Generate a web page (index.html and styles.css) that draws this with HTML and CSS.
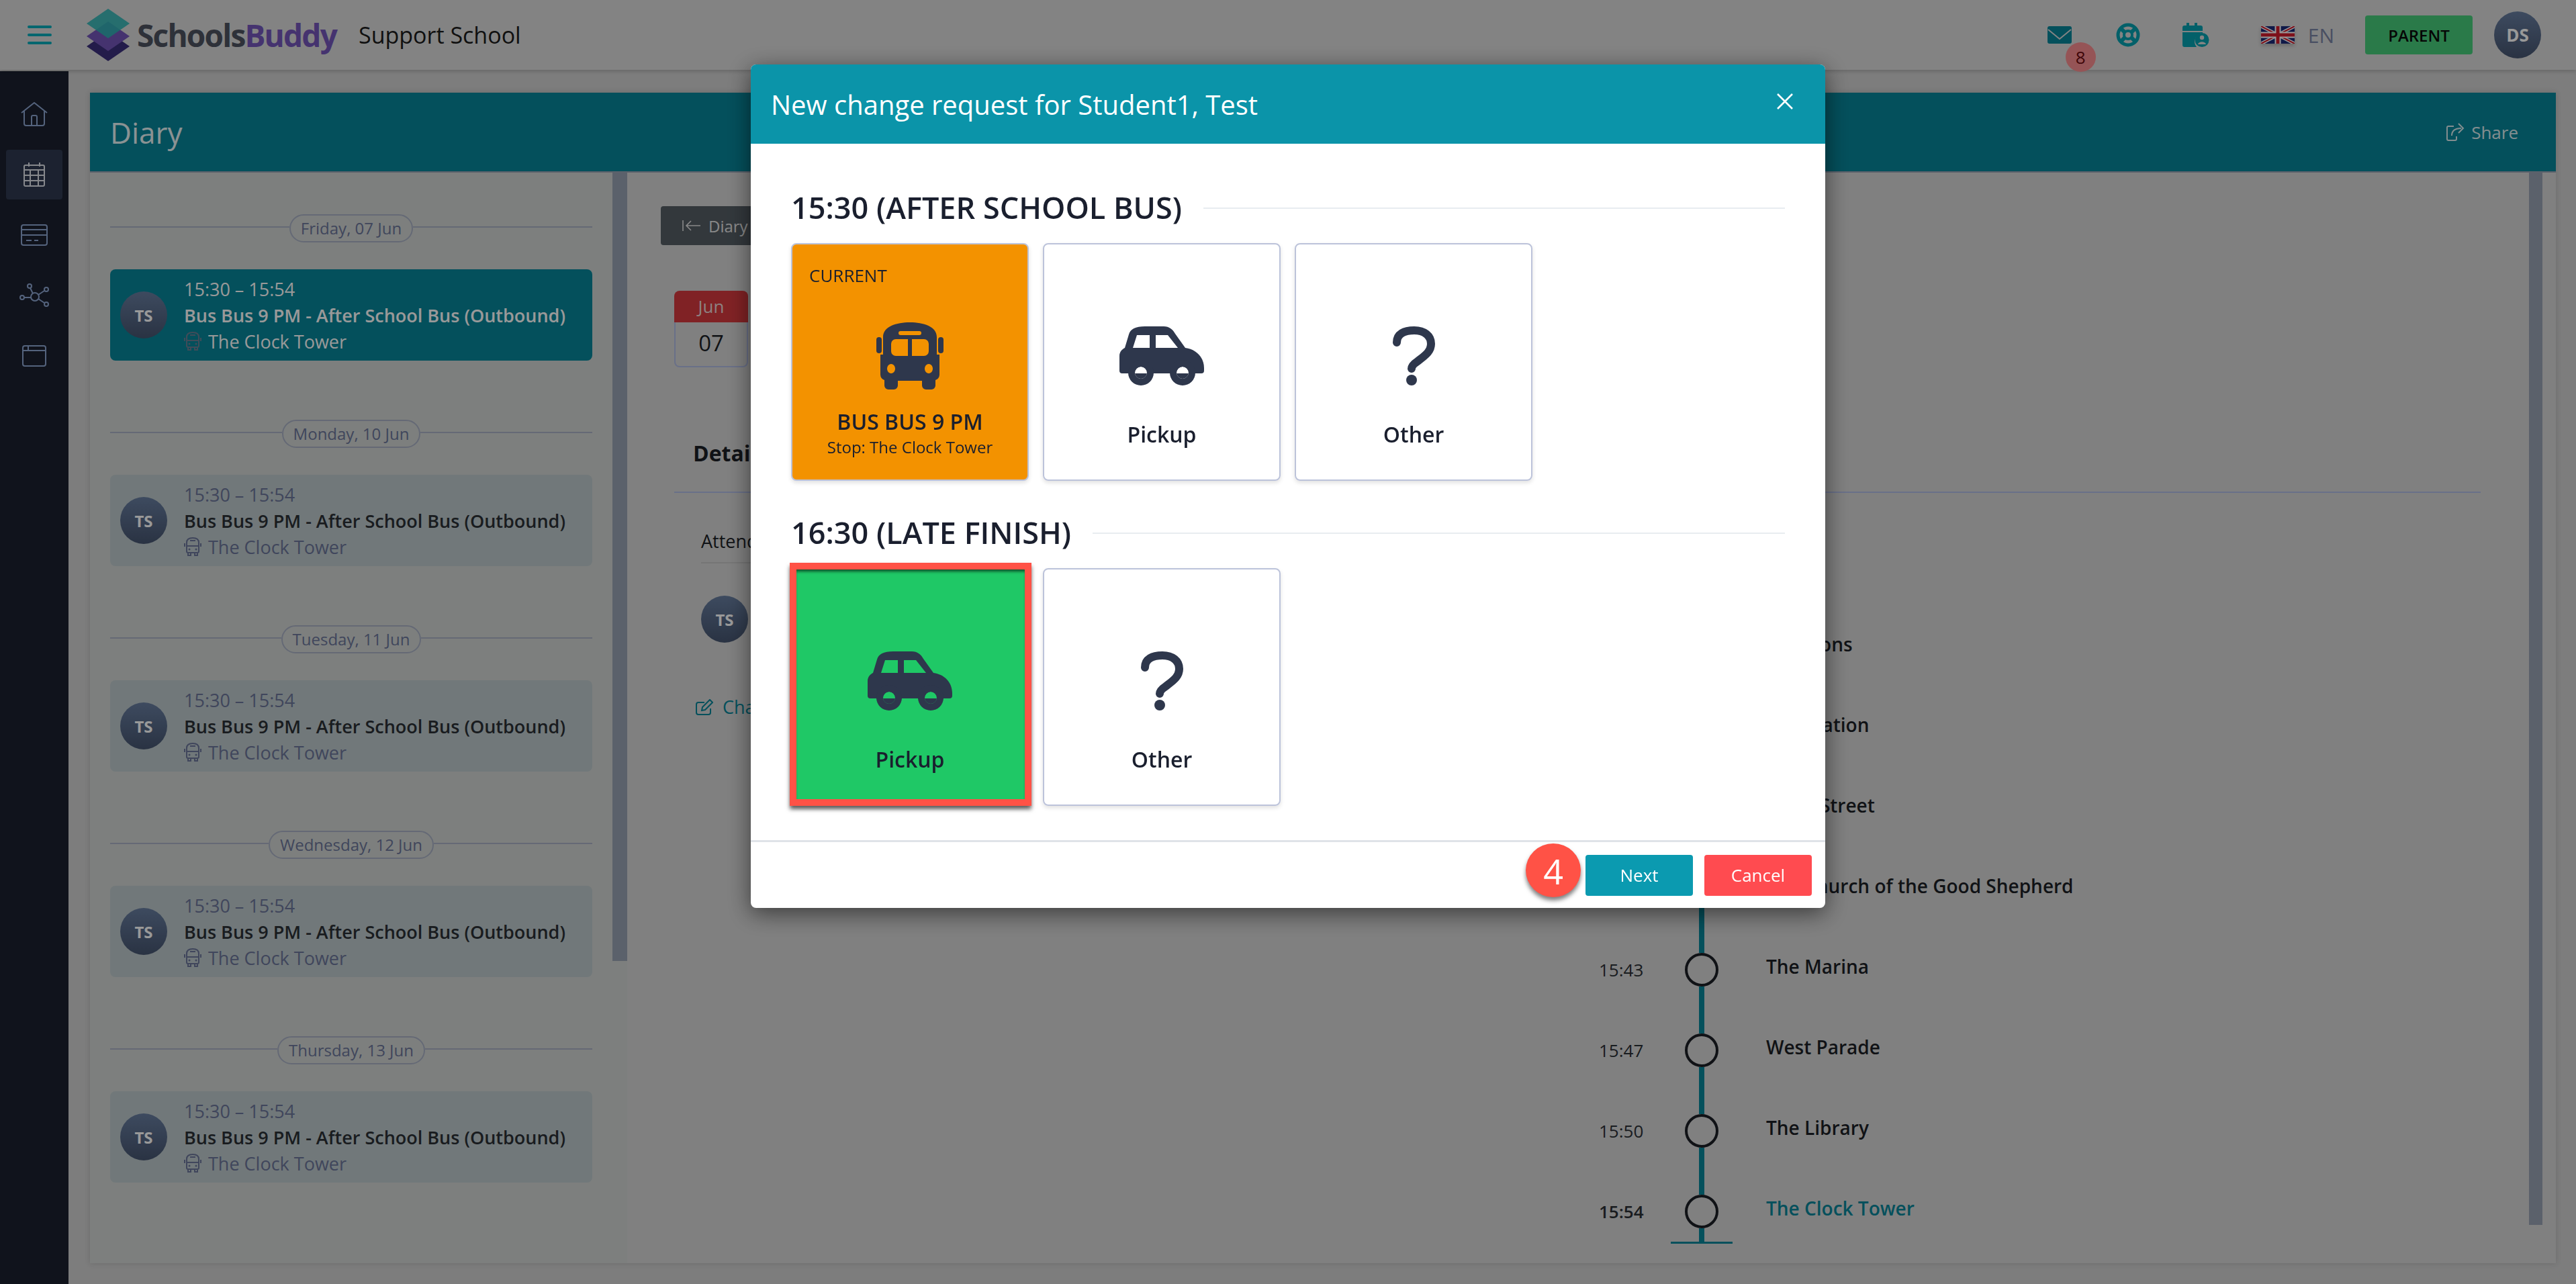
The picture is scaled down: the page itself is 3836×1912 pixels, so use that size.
FILE: index.html
```html
<!DOCTYPE html>
<html lang="en">
<head>
    <meta charset="UTF-8">
    <title>SchoolsBuddy - Diary</title>
    <link rel="stylesheet" href="styles.css">
</head>
<body>
    <svg class="defs" width="0" height="0">
        <symbol id="mini-bus" viewBox="0 0 26 28">
            <path d="M4 8C4 3 8 1 13 1s9 2 9 7v13a2 2 0 0 1-2 2H6a2 2 0 0 1-2-2zM4 13h18M9 5h8M6 23v4h4v-4M16 23v4h4v-4M1 9v5M25 9v5" fill="none" stroke="currentColor" stroke-width="2"/>
            <circle cx="8" cy="18" r="1.5" fill="currentColor"/>
            <circle cx="18" cy="18" r="1.5" fill="currentColor"/>
        </symbol>
        <symbol id="bus" viewBox="0 0 100 100">
            <path fill-rule="evenodd" d="M10 22C10 6 30 0 50 0s40 6 40 22v26h4v30a9 9 0 0 1-6 8v8a6 6 0 0 1-6 6h-8a6 6 0 0 1-6-6v-7H32v7a6 6 0 0 1-6 6h-8a6 6 0 0 1-6-6v-8a9 9 0 0 1-6-8V48h4zM22 32a7 7 0 0 1 7-7h18v25H29a7 7 0 0 1-7-7zM53 25h18a7 7 0 0 1 7 7v11a7 7 0 0 1-7 7H53zM36 13h28a3 3 0 0 1 0 6H36a3 3 0 0 1 0-6zM22 62a6 7 0 1 0 .01 0zM78 62a6 7 0 1 0 .01 0z"/>
            <rect x="0" y="22" width="8" height="24" rx="4"/>
            <rect x="92" y="22" width="8" height="24" rx="4"/>
        </symbol>
        <symbol id="car" viewBox="0 0 126 88">
            <path fill-rule="evenodd" d="M38 0H66C74 0 79 4 83 11L98 32C114 34 126 46 126 62V66a4 4 0 0 1-4 4H4a4 4 0 0 1-4-4V44C0 38 4 34 8 32L14 12C16 4 24 0 38 0zM26 13H45V32H20zM54 13H72L87 32H54zM23 69a9 9 0 1 0 18 0a9 9 0 1 0-18 0zM85 69a9 9 0 1 0 18 0a9 9 0 1 0-18 0z"/>
            <path fill-rule="evenodd" d="M13 69a19 19 0 1 0 38 0a19 19 0 1 0-38 0zM23 69a9 9 0 1 0 18 0a9 9 0 1 0-18 0zM75 69a19 19 0 1 0 38 0a19 19 0 1 0-38 0zM85 69a9 9 0 1 0 18 0a9 9 0 1 0-18 0z"/>
        </symbol>
        <symbol id="question" viewBox="0 0 65 88">
            <path d="M7 24C7 11 18 6 33 6c15 0 25 8 25 20 0 12-10 18-20 26-6 4-9 7-9 11" fill="none" stroke="currentColor" stroke-width="12" stroke-linecap="round"/>
            <ellipse cx="29" cy="80" rx="8" ry="8"/>
        </symbol>
    </svg>

    <header class="topbar">
        <svg class="burger" viewBox="0 0 36 28"><path d="M2 2h32M2 14h32M2 26h32" stroke="currentColor" stroke-width="4" stroke-linecap="round"/></svg>
        <svg class="logo-mark" viewBox="0 0 64 78">
            <path d="M32 34L64 56 32 78 0 56z" fill="#3b2f7c"/>
            <path d="M32 19L64 41 32 63 0 41z" fill="#7355b9"/>
            <path d="M32 0L64 22 32 44 0 22z" fill="#2fb3b3" fill-opacity=".9"/>
        </svg>
        <div class="logo-text">Schools<span>Buddy</span></div>
        <div class="school-name">Support School</div>

        <div class="top-actions">
            <div class="mail">
                <svg class="mail-icon" viewBox="0 0 36 26"><rect width="36" height="26" rx="3" fill="currentColor"/><path d="M1 5l17 14L35 5" fill="none" stroke="#dadada" stroke-width="2"/></svg>
                <span class="mail-badge">8</span>
            </div>
            <svg class="life-icon" viewBox="0 0 36 36">
                <circle cx="18" cy="18" r="15" fill="none" stroke="currentColor" stroke-width="5"/>
                <circle cx="18" cy="18" r="6" fill="none" stroke="currentColor" stroke-width="4"/>
                <path d="M6 7l7 7M30 7l-7 7M6 29l7-7M30 29l-7-7" stroke="currentColor" stroke-width="6"/>
            </svg>
            <svg class="cal-icon" viewBox="0 0 40 36">
                <path d="M6 0h4v5H6zM18 0h4v5h-4zM3 4h24a3 3 0 0 1 3 3v5H0V7a3 3 0 0 1 3-3zM0 14h30v1a13 13 0 0 0-9 21H3a3 3 0 0 1-3-3z" fill="currentColor"/>
                <circle cx="29" cy="25.500" r="10.500" fill="currentColor"/>
                <circle cx="29" cy="22" r="3.200" fill="#dadada"/>
                <path d="M23 32c1-5 11-5 12 0z" fill="#dadada"/>
            </svg>
            <svg class="flag" viewBox="0 0 50 26">
                <rect width="50" height="26" fill="#1c2a78"/>
                <path d="M0 0l50 26M50 0L0 26" stroke="#fff" stroke-width="5"/>
                <path d="M0 0l50 26M50 0L0 26" stroke="#d01c2c" stroke-width="2"/>
                <path d="M25 0v26M0 13h50" stroke="#fff" stroke-width="9"/>
                <path d="M25 0v26M0 13h50" stroke="#d01c2c" stroke-width="5"/>
            </svg>
            <span class="lang">EN</span>
            <span class="role-btn">PARENT</span>
            <span class="avatar avatar-top">DS</span>
        </div>
    </header>

    <div class="shell">
        <nav class="sidebar">
            <div class="side-item">
                <svg width="40" height="36" viewBox="0 0 40 36"><path d="M1 16L20 1l19 15M5 13v19a3 3 0 0 0 3 3h24a3 3 0 0 0 3-3V13M16 35V22a2 2 0 0 1 2-2h4a2 2 0 0 1 2 2v13"/></svg>
            </div>
            <div class="side-item active">
                <svg width="32" height="36" viewBox="4 0 32 36"><path d="M5 6a2 2 0 0 1 2-2h26a2 2 0 0 1 2 2v27a2 2 0 0 1-2 2H7a2 2 0 0 1-2-2zM5 11h30M5 19h30M5 27h30M14 11v24M26 11v24M12 0v6M28 0v6"/></svg>
            </div>
            <div class="side-item">
                <svg width="40" height="32" viewBox="0 0 40 32"><path d="M1 4a3 3 0 0 1 3-3h32a3 3 0 0 1 3 3v24a3 3 0 0 1-3 3H4a3 3 0 0 1-3-3zM1 8h38M1 16h38M8 24h8M20 24h6"/></svg>
            </div>
            <div class="side-item">
                <svg width="44" height="36" viewBox="0 0 44 36"><circle cx="23" cy="20" r="6"/><circle cx="4" cy="21" r="3"/><circle cx="15" cy="4" r="3"/><circle cx="40" cy="9" r="3"/><circle cx="40" cy="31" r="3"/><path d="M7 21h10M16 7l4 8M37 11l-9 6M37 29l-9-6"/></svg>
            </div>
            <div class="side-item">
                <svg width="36" height="32" viewBox="0 0 36 32"><path d="M1 4a3 3 0 0 1 3-3h28a3 3 0 0 1 3 3v24a3 3 0 0 1-3 3H4a3 3 0 0 1-3-3zM1 8h34M9 1v7"/></svg>
            </div>
        </nav>

        <main class="main">
            <div class="panel">
                <div class="panel-head">
                    <h1>Diary</h1>
                    <div class="share">
                        <svg viewBox="0 0 30 27"><path d="M11 5H3a2 2 0 0 0-2 2v17a2 2 0 0 0 2 2h10a2 2 0 0 0 2-2v-4M8 19c0-8 6-11 14-11M18 1l7 7-7 7" fill="none" stroke="currentColor" stroke-width="2"/></svg>
                        <span>Share</span>
                    </div>
                </div>

                <div class="panel-body">
                    <div class="left-pane">
                        <div class="day-list">
                            <section class="day">
                                <div class="day-label"><span>Friday, 07 Jun</span></div>
                                <div class="trip active">
                                    <span class="avatar">TS</span>
                                    <div class="trip-text">
                                        <div class="trip-time">15:30 – 15:54</div>
                                        <div class="trip-title">Bus Bus 9 PM - After School Bus (Outbound)</div>
                                        <div class="trip-place"><svg><use href="#mini-bus"/></svg>The Clock Tower</div>
                                    </div>
                                </div>
                            </section>
                            <section class="day">
                                <div class="day-label"><span>Monday, 10 Jun</span></div>
                                <div class="trip">
                                    <span class="avatar">TS</span>
                                    <div class="trip-text">
                                        <div class="trip-time">15:30 – 15:54</div>
                                        <div class="trip-title">Bus Bus 9 PM - After School Bus (Outbound)</div>
                                        <div class="trip-place"><svg><use href="#mini-bus"/></svg>The Clock Tower</div>
                                    </div>
                                </div>
                            </section>
                            <section class="day">
                                <div class="day-label"><span>Tuesday, 11 Jun</span></div>
                                <div class="trip">
                                    <span class="avatar">TS</span>
                                    <div class="trip-text">
                                        <div class="trip-time">15:30 – 15:54</div>
                                        <div class="trip-title">Bus Bus 9 PM - After School Bus (Outbound)</div>
                                        <div class="trip-place"><svg><use href="#mini-bus"/></svg>The Clock Tower</div>
                                    </div>
                                </div>
                            </section>
                            <section class="day">
                                <div class="day-label"><span>Wednesday, 12 Jun</span></div>
                                <div class="trip">
                                    <span class="avatar">TS</span>
                                    <div class="trip-text">
                                        <div class="trip-time">15:30 – 15:54</div>
                                        <div class="trip-title">Bus Bus 9 PM - After School Bus (Outbound)</div>
                                        <div class="trip-place"><svg><use href="#mini-bus"/></svg>The Clock Tower</div>
                                    </div>
                                </div>
                            </section>
                            <section class="day">
                                <div class="day-label"><span>Thursday, 13 Jun</span></div>
                                <div class="trip">
                                    <span class="avatar">TS</span>
                                    <div class="trip-text">
                                        <div class="trip-time">15:30 – 15:54</div>
                                        <div class="trip-title">Bus Bus 9 PM - After School Bus (Outbound)</div>
                                        <div class="trip-place"><svg><use href="#mini-bus"/></svg>The Clock Tower</div>
                                    </div>
                                </div>
                            </section>
                        </div>
                        <div class="scroll-thumb left-thumb"></div>
                    </div>

                    <div class="right-pane">
                        <div class="back-btn">
                            <svg viewBox="0 0 28 20"><path d="M1 2v16M27 10H6M13 3l-7 7 7 7" fill="none" stroke="currentColor" stroke-width="1.600"/></svg>
                            <span>Diary</span>
                        </div>
                        <div class="date-box">
                            <div class="date-month">Jun</div>
                            <div class="date-day">07</div>
                        </div>
                        <div class="details">
                            <h2 class="details-title">Details</h2>
                            <div class="details-body">
                                <div class="attendees">
                                    <div class="attendees-title">Attendees</div>
                                    <span class="avatar">TS</span>
                                    <div class="change-link">
                                        <svg viewBox="0 0 26 24"><path d="M22 14v6a3 3 0 0 1-3 3H4a3 3 0 0 1-3-3V8a3 3 0 0 1 3-3h9M9 17l1-5L21 1l4 4-11 11z" fill="none" stroke="currentColor" stroke-width="2"/></svg>
                                        <span>Change</span>
                                    </div>
                                </div>
                                <div class="route">
                                    <div class="stop"><span class="stop-time">15:30</span><span class="stop-mark"><i></i></span><span class="stop-name">The Lions</span></div>
                                    <div class="stop"><span class="stop-time">15:33</span><span class="stop-mark"><i></i></span><span class="stop-name">The Station</span></div>
                                    <div class="stop"><span class="stop-time">15:36</span><span class="stop-mark"><i></i></span><span class="stop-name">Kings Street</span></div>
                                    <div class="stop"><span class="stop-time">15:39</span><span class="stop-mark"><i></i></span><span class="stop-name">The Church of the Good Shepherd</span></div>
                                    <div class="stop"><span class="stop-time">15:43</span><span class="stop-mark"><i></i></span><span class="stop-name">The Marina</span></div>
                                    <div class="stop"><span class="stop-time">15:47</span><span class="stop-mark"><i></i></span><span class="stop-name">West Parade</span></div>
                                    <div class="stop"><span class="stop-time">15:50</span><span class="stop-mark"><i></i></span><span class="stop-name">The Library</span></div>
                                    <div class="stop stop-last"><span class="stop-time">15:54</span><span class="stop-mark"><i></i></span><span class="stop-name">The Clock Tower</span></div>
                                </div>
                            </div>
                        </div>
                    </div>
                    <div class="scroll-thumb right-thumb"></div>
                </div>
            </div>
        </main>
    </div>

    <div class="backdrop">
        <div class="modal">
            <div class="modal-head">
                <span>New change request for Student1, Test</span>
                <svg class="modal-close" viewBox="0 0 26 26"><path d="M2 2l22 22M24 2L2 24" stroke="currentColor" stroke-width="2.600"/></svg>
            </div>
            <div class="modal-body">
                <div class="slot">
                    <div class="slot-title"><span>15:30 (AFTER SCHOOL BUS)</span></div>
                    <div class="choices">
                        <div class="choice current">
                            <span class="choice-tag">CURRENT</span>
                            <div class="choice-icon"><svg class="ic-bus"><use href="#bus"/></svg></div>
                            <div class="choice-label">
                                <strong>BUS BUS 9 PM</strong>
                                <small>Stop: The Clock Tower</small>
                            </div>
                        </div>
                        <div class="choice">
                            <div class="choice-icon"><svg class="ic-car"><use href="#car"/></svg></div>
                            <div class="choice-label">Pickup</div>
                        </div>
                        <div class="choice">
                            <div class="choice-icon"><svg class="ic-question"><use href="#question"/></svg></div>
                            <div class="choice-label">Other</div>
                        </div>
                    </div>
                </div>
                <div class="slot">
                    <div class="slot-title"><span>16:30 (LATE FINISH)</span></div>
                    <div class="choices">
                        <div class="choice selected">
                            <div class="choice-icon"><svg class="ic-car"><use href="#car"/></svg></div>
                            <div class="choice-label">Pickup</div>
                            <div class="mark-box"></div>
                        </div>
                        <div class="choice">
                            <div class="choice-icon"><svg class="ic-question"><use href="#question"/></svg></div>
                            <div class="choice-label">Other</div>
                        </div>
                    </div>
                </div>
            </div>
            <div class="modal-foot">
                <span class="step-mark">4</span>
                <button class="btn btn-next">Next</button>
                <button class="btn btn-cancel">Cancel</button>
            </div>
        </div>
    </div>
</body>
</html>
```

FILE: styles.css
```css
* {
    box-sizing: border-box;
}

html, body {
    margin: 0;
    height: 100%;
    overflow: hidden;
}

body {
    font-family: "Open Sans", "Liberation Sans", sans-serif;
    font-size: 27px;
    background-color: #d0d0d0;
    color: #2b2f35;
}

.defs {
    position: absolute;
}

/* top bar */
.topbar {
    height: 104px;
    display: flex;
    align-items: center;
    background-color: #dadada;
    box-shadow: 0 2px 6px rgba(0, 0, 0, 0.2);
    position: relative;
}

.burger {
    width: 36px;
    height: 28px;
    margin-left: 41px;
    color: #05abba;
}

.logo-mark {
    width: 64px;
    height: 78px;
    margin-left: 52px;
}

.logo-text {
    margin-left: 11px;
    font-size: 46px;
    font-weight: 700;
    letter-spacing: -1.8px;
    color: #4d5360;
}

.logo-text span {
    color: #7355b9;
}

.school-name {
    margin-left: 33px;
    font-size: 34px;
    color: #1c1c1c;
}

.top-actions {
    margin-left: auto;
    margin-right: 52px;
    display: flex;
    align-items: center;
    color: #05a0b0;
}

.mail {
    position: relative;
    display: flex;
}

.mail-icon {
    width: 36px;
    height: 26px;
    color: #078599;
}

.mail-badge {
    position: absolute;
    left: 27px;
    top: 24px;
    width: 45px;
    height: 44px;
    border-radius: 50%;
    display: flex;
    align-items: center;
    justify-content: center;
    font-size: 26px;
    background-color: #f98d8f;
    color: #6a0a10;
}

.life-icon {
    width: 36px;
    height: 36px;
    margin-left: 66px;
    color: #05a0b0;
}

.cal-icon {
    width: 40px;
    height: 36px;
    margin-left: 63px;
    color: #05a0b0;
}

.flag {
    width: 50px;
    height: 26px;
    margin-left: 77px;
    box-shadow: 0 3px 5px rgba(0, 0, 0, 0.2);
}

.lang {
    margin-left: 20px;
    font-size: 30px;
    color: #7a84a4;
}

.role-btn {
    margin-left: 46px;
    width: 160px;
    height: 58px;
    border-radius: 4px;
    display: flex;
    align-items: center;
    justify-content: center;
    background-color: #46cc7b;
    color: #0a0a0a;
    font-size: 24px;
    font-weight: 600;
}

.avatar {
    width: 70px;
    height: 70px;
    flex: none;
    border-radius: 50%;
    display: flex;
    align-items: center;
    justify-content: center;
    background: linear-gradient(#677d9f, #465570);
    color: #fff;
    font-size: 24px;
    font-weight: 700;
}

.avatar-top {
    margin-left: 32px;
    font-size: 26px;
}

/* page frame */
.shell {
    display: flex;
    height: 1808px;
}

.sidebar {
    width: 102px;
    margin-top: 2px;
    padding-top: 27px;
    background-color: #1b2130;
    display: flex;
    flex-direction: column;
    align-items: center;
    gap: 16px;
}

.side-item {
    width: 84px;
    height: 74px;
    border-radius: 4px;
    display: flex;
    align-items: center;
    justify-content: center;
}

.side-item.active {
    background-color: #2f3950;
}

.side-item svg {
    fill: none;
    stroke: #8da5d0;
    stroke-width: 2;
}

.side-item.active svg {
    stroke: #dfe3ea;
}

.main {
    flex: 1;
    padding: 34px 30px 31px 32px;
}

.panel {
    height: 100%;
    background-color: #d5d5d5;
    box-shadow: 0 0 8px rgba(0, 0, 0, 0.15);
    display: flex;
    flex-direction: column;
}

.panel-head {
    height: 119px;
    flex: none;
    background-color: #078599;
    border-bottom: 2px solid #98a2b3;
    padding: 0 56px 0 30px;
    display: flex;
    align-items: center;
    justify-content: space-between;
    color: #fff;
}

.panel-head h1 {
    margin: 0;
    font-size: 44px;
    font-weight: 400;
    opacity: 0.9;
}

.share {
    display: flex;
    align-items: center;
    gap: 7px;
    font-size: 26px;
    opacity: 0.85;
}

.share svg {
    width: 30px;
    height: 27px;
}

.panel-body {
    flex: 1;
    display: flex;
    min-height: 0;
}

.scroll-thumb {
    flex: none;
    align-self: flex-start;
    background-color: #98a2b3;
}

/* left list */
.left-pane {
    width: 800px;
    flex: none;
    display: flex;
    background-color: #d0d4d2;
}

.day-list {
    width: 778px;
    padding: 62px 30px 0;
}

.left-thumb {
    width: 22px;
    height: 1174px;
}

.day {
    margin-bottom: 88px;
}

.day-label {
    height: 42px;
    display: flex;
    align-items: center;
    margin-bottom: 40px;
    font-size: 24px;
    color: #6b7599;
}

.day-label::before, .day-label::after {
    content: "";
    flex: 1;
    height: 2px;
    margin-bottom: 5px;
    background-color: #a8b0c4;
}

.day-label span {
    height: 42px;
    padding: 0 15px;
    border: 2px solid #a8b0c4;
    border-radius: 21px;
    display: flex;
    align-items: center;
    line-height: 1;
}

.trip {
    height: 136px;
    padding-left: 15px;
    border-radius: 8px;
    display: flex;
    align-items: center;
    gap: 25px;
    background-color: #bcc8cb;
}

.trip.active {
    background-color: #078599;
    color: #fff;
}

.trip-text {
    line-height: 39px;
}

.trip-time, .trip-place {
    color: #6b7599;
}

.trip-title {
    font-weight: 600;
}

.trip-place {
    display: flex;
    align-items: center;
    gap: 10px;
}

.trip-place svg {
    width: 26px;
    height: 28px;
}

.trip.active .trip-time, .trip.active .trip-place {
    color: #fff;
}

.trip.active .trip-place svg {
    color: #6b7f94;
}

/* right side */
.right-pane {
    flex: 1;
    padding: 50px 0 0 50px;
    min-width: 0;
}

.right-thumb {
    width: 20px;
    height: 1567px;
    margin-right: 20px;
}

.back-btn {
    width: 180px;
    height: 58px;
    padding-left: 32px;
    border-radius: 4px;
    display: flex;
    align-items: center;
    gap: 11px;
    background-color: #555e65;
    color: #e3e3e3;
    font-size: 24px;
}

.back-btn svg {
    width: 28px;
    height: 20px;
}

.date-box {
    width: 110px;
    margin: 68px 0 0 20px;
    text-align: center;
}

.date-month {
    height: 47px;
    border-radius: 8px 8px 0 0;
    background-color: #d63a3e;
    color: #ecd8d8;
    line-height: 47px;
    font-size: 26px;
}

.date-day {
    height: 67px;
    border: 2px solid #b0bbe3;
    border-top: none;
    border-radius: 0 0 8px 8px;
    font-size: 33px;
    line-height: 62px;
    color: #1c1f26;
}

.details {
    width: 2690px;
    margin: 106px 0 0 20px;
}

.details-title {
    margin: 0;
    height: 81px;
    padding-left: 28px;
    border-bottom: 2px solid #b0bbe3;
    font-size: 32px;
    line-height: 44px;
    font-weight: 700;
    color: #1c1f26;
}

.details-body {
    display: grid;
    grid-template-columns: 1377px 1fr;
}

.attendees {
    padding: 52px 0 0 40px;
}

.attendees-title {
    height: 53px;
    margin-bottom: 48px;
    line-height: 40px;
    border-bottom: 2px solid #c4c4c4;
    color: #1c1f26;
}

.change-link {
    margin: 76px 0 0 -8px;
    display: flex;
    align-items: center;
    gap: 14px;
    color: #078599;
    line-height: 40px;
}

.change-link svg {
    width: 26px;
    height: 24px;
}

.route {
    margin-top: 170px;
}

.stop {
    height: 120px;
    display: flex;
    align-items: stretch;
}

.stop-time {
    width: 128px;
    display: flex;
    align-items: center;
    font-size: 26px;
    color: #2b2f35;
}

.stop-last .stop-time {
    font-weight: 600;
}

.stop-mark {
    width: 50px;
    flex: none;
    display: flex;
    flex-direction: column;
    align-items: center;
}

.stop-mark::before, .stop-mark::after {
    content: "";
    flex: 1;
    width: 8px;
    background-color: #078599;
}

.stop-mark i {
    width: 50px;
    height: 50px;
    flex: none;
    border: 4px solid #1c1f26;
    border-radius: 50%;
}

.stop-last .stop-mark {
    height: 108px;
    width: 92px;
    margin: 0 -21px;
    background: linear-gradient(#078599, #078599) bottom / 100% 3px no-repeat;
}

.stop-last .stop-mark::before {
    flex: none;
    height: 35px;
}

.stop-name {
    margin-left: 71px;
    margin-top: 37px;
    line-height: 36px;
    font-size: 28px;
    font-weight: 600;
    white-space: nowrap;
    color: #1c1f26;
}

.stop-last .stop-name {
    color: #078599;
}

/* change request modal */
.backdrop {
    position: fixed;
    inset: 0;
    background-color: rgba(0, 0, 0, 0.4);
    display: flex;
    justify-content: center;
    align-items: flex-start;
    padding-top: 96px;
}

.modal {
    width: 1600px;
    border-radius: 8px;
    overflow: hidden;
    background-color: #fff;
    box-shadow: 0 8px 34px rgba(0, 0, 0, 0.55);
}

.modal-head {
    height: 118px;
    padding: 0 47px 0 30px;
    display: flex;
    align-items: center;
    justify-content: space-between;
    background-color: #0b94a9;
    color: #fff;
    font-size: 40px;
}

.modal-close {
    width: 26px;
    height: 26px;
    margin-top: -8px;
}

.modal-body {
    padding: 64px 60px 51px 60px;
}

.slot + .slot {
    margin-top: 46px;
}

.slot-title {
    height: 60px;
    margin-bottom: 24px;
    display: flex;
    align-items: center;
    gap: 32px;
    font-size: 45px;
    font-weight: 600;
    color: #1a1f2e;
}

.slot-title::after {
    content: "";
    flex: 1;
    height: 2px;
    margin-top: 3px;
    background-color: #e8ecf0;
}

.choices {
    display: flex;
    gap: 21px;
}

.choice {
    width: 354px;
    height: 354px;
    padding-top: 116px;
    position: relative;
    border: 2px solid #bcc3da;
    border-radius: 8px;
    display: flex;
    flex-direction: column;
    box-shadow: 0 3px 6px rgba(0, 0, 0, 0.12);
    color: #2e374c;
}

.choice.current {
    background-color: #f39200;
}

.choice.selected {
    background-color: #1fc866;
}

.choice-tag {
    position: absolute;
    left: 25px;
    top: 28px;
    font-size: 26px;
    color: #1a1f2e;
}

.choice-icon {
    height: 100px;
    flex: none;
    display: flex;
    align-items: center;
    justify-content: center;
}

.choice-icon svg {
    fill: #2e374c;
    color: #2e374c;
}

.ic-bus {
    width: 100px;
    height: 100px;
}

.ic-car {
    width: 126px;
    height: 88px;
}

.ic-question {
    width: 65px;
    height: 88px;
}

.choice-label {
    flex: 1;
    padding-bottom: 2px;
    display: flex;
    flex-direction: column;
    align-items: center;
    justify-content: center;
    font-size: 32px;
    font-weight: 600;
    color: #1a1f2e;
}

.choice-label strong {
    font-weight: 600;
    line-height: 40px;
}

.choice-label small {
    font-size: 24px;
    font-weight: 400;
    line-height: 36px;
}

.mark-box {
    position: absolute;
    inset: -10px -6px -2px -4px;
    border: 10px solid #ff5246;
    box-shadow: 0 5px 6px rgba(0, 0, 0, 0.6), inset 0 5px 4px -2px rgba(0, 0, 0, 0.6);
}

.modal-foot {
    height: 101px;
    padding-right: 20px;
    border-top: 3px solid #dfe3e8;
    display: flex;
    align-items: center;
    justify-content: flex-end;
}

.step-mark {
    width: 82px;
    height: 80px;
    margin: -14px 7px 0 0;
    border-radius: 50%;
    display: flex;
    align-items: center;
    justify-content: center;
    background-color: #ff5246;
    color: #fff;
    font-size: 52px;
    font-weight: 500;
    box-shadow: 0 5px 6px rgba(0, 0, 0, 0.5);
}

.btn {
    width: 160px;
    height: 61px;
    border: none;
    border-radius: 4px;
    color: #fff;
    font-family: inherit;
    font-size: 26px;
}

.btn-next {
    background-color: #0b9ab0;
}

.btn-cancel {
    margin-left: 17px;
    background-color: #ff4b50;
}
```
